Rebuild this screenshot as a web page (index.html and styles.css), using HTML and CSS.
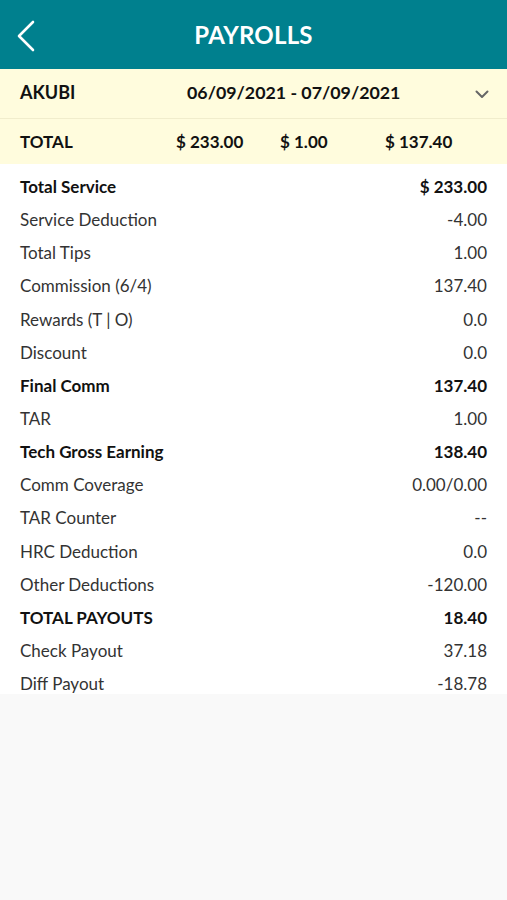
FILE: index.html
```html
<!DOCTYPE html>
<html lang="en">
   <head>
      <meta charset="UTF-8" />
      <meta name="viewport" content="width=device-width, initial-scale=1.0"/>
      <title>Payrolls</title>
      <link rel="stylesheet" href="styles.css">
   </head>
   <body>
      <div class="header">
         <button class="back-button" aria-label="Back">
            <svg width="18" height="32" viewBox="0 0 18 32">
               <polyline points="16,2 2,16 16,30" fill="none" stroke="#fff" stroke-width="2.6" stroke-linecap="round" stroke-linejoin="round"/>
            </svg>
         </button>
         <div class="header-title">PAYROLLS</div>
      </div>
      <div class="summary">
         <div class="summary-row period-row">
            <div class="tech-name">AKUBI</div>
            <div class="period">06/09/2021 - 07/09/2021</div>
            <svg class="chevron" width="14" height="9" viewBox="0 0 14 9">
               <polyline points="1.5,1.5 7,7 12.5,1.5" fill="none" stroke="#666" stroke-width="2" stroke-linecap="round" stroke-linejoin="round"/>
            </svg>
         </div>
         <div class="summary-row totals-row">
            <div>TOTAL</div>
            <div>$ 233.00</div>
            <div>$ 1.00</div>
            <div>$ 137.40</div>
         </div>
      </div>
      <div class="details">
         <div class="line strong"><span>Total Service</span><span>$ 233.00</span></div>
         <div class="line"><span>Service Deduction</span><span>-4.00</span></div>
         <div class="line"><span>Total Tips</span><span>1.00</span></div>
         <div class="line"><span>Commission (6/4)</span><span>137.40</span></div>
         <div class="line"><span>Rewards (T | O)</span><span>0.0</span></div>
         <div class="line"><span>Discount</span><span>0.0</span></div>
         <div class="line strong"><span>Final Comm</span><span>137.40</span></div>
         <div class="line"><span>TAR</span><span>1.00</span></div>
         <div class="line strong"><span>Tech Gross Earning</span><span>138.40</span></div>
         <div class="line"><span>Comm Coverage</span><span>0.00/0.00</span></div>
         <div class="line"><span>TAR Counter</span><span>--</span></div>
         <div class="line"><span>HRC Deduction</span><span>0.0</span></div>
         <div class="line"><span>Other Deductions</span><span>-120.00</span></div>
         <div class="line strong"><span>TOTAL PAYOUTS</span><span>18.40</span></div>
         <div class="line"><span>Check Payout</span><span>37.18</span></div>
         <div class="line"><span>Diff Payout</span><span>-18.78</span></div>
      </div>
   </body>
</html>
```

FILE: styles.css
```css
body {
margin: 0;
padding: 0;
background-color: #f9f9f9;
font-family: Lato, "Open Sans", sans-serif;
color: #222;
}
.header {
height: 69px;
background-color: #00808e;
display: flex;
align-items: center;
justify-content: center;
position: relative;
}
.back-button {
position: absolute;
left: 17px;
top: 20px;
background: none;
border: none;
padding: 0;
display: flex;
}
.header-title {
color: white;
font-weight: bold;
font-size: 24px;
letter-spacing: 0.2px;
}
.summary {
background-color: #fffcdd;
}
.summary-row {
padding: 0 18px 0 20px;
display: flex;
align-items: center;
font-weight: bold;
font-size: 18px;
color: #111;
}
.period-row {
height: 46px;
padding-bottom: 3px;
border-bottom: 1px solid #f1edcc;
}
.tech-name {
width: 167px;
}
.period {
flex: 1;
font-size: 17.8px;
}
.chevron {
margin-top: 4px;
}
.totals-row {
height: 45px;
font-size: 17px;
display: grid;
grid-template-columns: 156px 104px 105px 1fr;
}
.details {
background-color: white;
height: 524px;
padding-top: 6px;
padding-left: 20px;
padding-right: 20px;
overflow: hidden;
}
.line {
height: 33.15px;
display: flex;
align-items: center;
justify-content: space-between;
font-size: 17px;
color: #333;
}
.line.strong {
font-weight: bold;
color: #111;
}
```
